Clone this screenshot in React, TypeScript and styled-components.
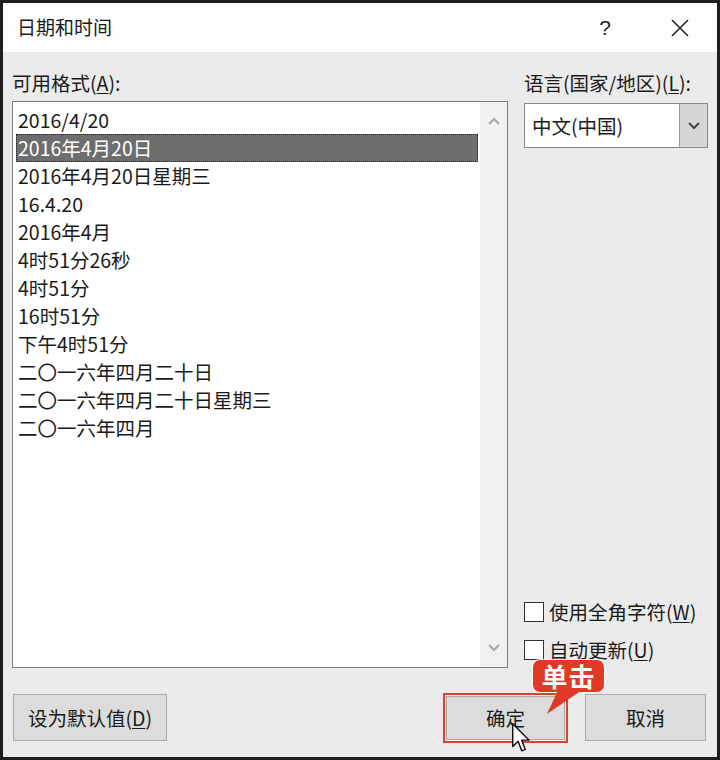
import React from "react";
import styled, { createGlobalStyle } from "styled-components";

const Global = createGlobalStyle`
  html, body { margin: 0; padding: 0; background: #1e1e1e; }
  body { font-family: "Noto Sans CJK SC", "Noto Sans", sans-serif; color: #1a1a1a; }
  * { box-sizing: border-box; }
`;

const Frame = styled.div`
  width: 720px;
  height: 760px;
  border: 3px solid #1e1e1e;
  display: flex;
  flex-direction: column;
  background: #ebebeb;
  font-size: 19.5px;
`;

const TitleBar = styled.div`
  height: 49px;
  flex: none;
  background: #fdfdfd;
  display: flex;
  align-items: center;
  padding: 0 14px 0 14px;
`;

const Title = styled.div`
  flex: 1;
  font-size: 19px;
  line-height: 1;
  padding-bottom: 2px;
`;

const TitleButton = styled.div`
  width: 46px;
  height: 40px;
  display: flex;
  align-items: center;
  justify-content: center;
  font-family: "Liberation Sans", sans-serif;
  font-size: 21px;
  color: #222;
  & + & { margin-left: 29px; }
`;

const Body = styled.div`
  flex: 1;
  display: flex;
  flex-direction: column;
  padding: 19px 9px 16px 9px;
`;

const Columns = styled.div`
  display: grid;
  grid-template-columns: 496px 184px;
  column-gap: 16px;
`;

const Column = styled.div`
  display: flex;
  flex-direction: column;
`;

const Label = styled.div<{ $gap: number }>`
  line-height: 24px;
  height: 24px;
  margin-bottom: ${(p) => p.$gap}px;
  white-space: nowrap;
`;

const Key = styled.span`
  text-decoration: underline;
  text-underline-offset: 2px;
`;

const ListBox = styled.div`
  height: 567px;
  border: 1px solid #7d7d7d;
  background: #fff;
  display: flex;
`;

const Items = styled.div`
  flex: 1;
  padding: 4px 2px 4px 3px;
  display: flex;
  flex-direction: column;
`;

const Item = styled.div<{ $selected?: boolean }>`
  height: 28px;
  line-height: 28px;
  padding-left: 2px;
  white-space: nowrap;
  color: ${(p) => (p.$selected ? "#fff" : "#1a1a1a")};
  background: ${(p) => (p.$selected ? "#6e6e6e" : "transparent")};
  outline: ${(p) => (p.$selected ? "1px dotted #222" : "none")};
  outline-offset: -1px;
`;

const ScrollTrack = styled.div`
  width: 27px;
  background: #f1f1f1;
  display: flex;
  flex-direction: column;
  justify-content: space-between;
`;

const ScrollButton = styled.div`
  height: 38px;
  display: flex;
  align-items: center;
  justify-content: center;
`;

const Select = styled.div`
  height: 45px;
  border: 1px solid #8a8a8a;
  background: #fff;
  display: flex;
  align-items: stretch;
`;

const SelectValue = styled.div`
  flex: 1;
  padding-left: 7px;
  display: flex;
  align-items: center;
`;

const DropButton = styled.div`
  width: 28px;
  background: #d6d6d6;
  border-left: 1px solid #9a9a9a;
  display: flex;
  align-items: center;
  justify-content: center;
`;

const CheckGroup = styled.div`
  margin-top: auto;
  display: flex;
  flex-direction: column;
  gap: 10px;
  padding-bottom: 4px;
`;

const CheckRow = styled.label`
  height: 28px;
  display: flex;
  align-items: center;
  gap: 5px;
  white-space: nowrap;
`;

const CheckText = styled.span`
  line-height: 28px;
`;

const Box = styled.span`
  width: 20px;
  height: 20px;
  border: 1px solid #333;
  background: #fff;
  flex: none;
`;

const ButtonRow = styled.div`
  margin-top: auto;
  display: flex;
  align-items: center;
  justify-content: space-between;
  padding-left: 1px;
  padding-right: 2px;
`;

const ButtonGroup = styled.div`
  display: flex;
  align-items: center;
  gap: 19px;
`;

const Button = styled.div<{ $w: number; $highlight?: boolean }>`
  position: relative;
  width: ${(p) => p.$w}px;
  height: ${(p) => (p.$highlight ? 44 : 47)}px;
  margin: ${(p) => (p.$highlight ? "0 1px" : "0")};
  background: #dcdcdc;
  border: 1px solid #ababab;
  display: flex;
  align-items: center;
  justify-content: center;
  white-space: nowrap;
  outline: ${(p) => (p.$highlight ? "2px solid #d8442e" : "none")};
  outline-offset: 1px;
`;

const ButtonText = styled.span`
  line-height: 1;
`;

const Callout = styled.div`
  position: absolute;
  left: 86px;
  top: -37px;
  width: 71px;
  height: 32px;
  background: #e03a26;
  border-radius: 7px;
  box-shadow: 0 0 0 1px rgba(255, 255, 255, 0.85);
  color: #fff;
  font-weight: 700;
  font-size: 26px;
  line-height: 32px;
  text-align: center;
  letter-spacing: 1px;
  z-index: 2;
`;

const Tail = styled.svg`
  position: absolute;
  left: 10px;
  top: 28px;
  overflow: visible;
`;

const Cursor = styled.svg`
  position: absolute;
  left: 65px;
  top: 26px;
  z-index: 3;
`;

const Chevron = ({ up, color = "#a8a8a8" }: { up?: boolean; color?: string }) => (
  <svg width="12" height="8" viewBox="0 0 12 8">
    <path
      d={up ? "M1 7 L6 2 L11 7" : "M1 1 L6 6 L11 1"}
      fill="none"
      stroke={color}
      strokeWidth="2"
    />
  </svg>
);

const items = [
  "2016/4/20",
  "2016年4月20日",
  "2016年4月20日星期三",
  "16.4.20",
  "2016年4月",
  "4时51分26秒",
  "4时51分",
  "16时51分",
  "下午4时51分",
  "二〇一六年四月二十日",
  "二〇一六年四月二十日星期三",
  "二〇一六年四月",
];

export default function App() {
  return (
    <>
      <Global />
      <Frame>
        <TitleBar>
          <Title>日期和时间</Title>
          <TitleButton>?</TitleButton>
          <TitleButton>
            <svg width="18" height="18" viewBox="0 0 18 18">
              <path d="M1 1 L17 17 M17 1 L1 17" stroke="#222" strokeWidth="1.6" />
            </svg>
          </TitleButton>
        </TitleBar>
        <Body>
          <Columns>
            <Column>
              <Label $gap={6}>
                可用格式(<Key>A</Key>):
              </Label>
              <ListBox>
                <Items>
                  {items.map((t, i) => (
                    <Item key={t} $selected={i === 1}>
                      {t}
                    </Item>
                  ))}
                </Items>
                <ScrollTrack>
                  <ScrollButton>
                    <Chevron up />
                  </ScrollButton>
                  <ScrollButton>
                    <Chevron />
                  </ScrollButton>
                </ScrollTrack>
              </ListBox>
            </Column>
            <Column>
              <Label $gap={8}>
                语言(国家/地区)(<Key>L</Key>):
              </Label>
              <Select>
                <SelectValue>中文(中国)</SelectValue>
                <DropButton>
                  <Chevron color="#444" />
                </DropButton>
              </Select>
              <CheckGroup>
                <CheckRow>
                  <Box />
                  <CheckText>
                    使用全角字符(<Key>W</Key>)
                  </CheckText>
                </CheckRow>
                <CheckRow>
                  <Box />
                  <CheckText>
                    自动更新(<Key>U</Key>)
                  </CheckText>
                </CheckRow>
              </CheckGroup>
            </Column>
          </Columns>
          <ButtonRow>
            <Button $w={154}>
              <ButtonText>
                设为默认值(<Key>D</Key>)
              </ButtonText>
            </Button>
            <ButtonGroup>
              <Button $w={119} $highlight>
                <ButtonText>确定</ButtonText>
                <Callout>
                  单击
                  <Tail width="45" height="30" viewBox="0 0 45 30">
                    <polygon points="16,0 42,0 4,26" fill="#e03a26" />
                  </Tail>
                </Callout>
                <Cursor width="20" height="30" viewBox="0 0 14 21">
                  <path
                    d="M0.5 0.5 L0.5 16.5 L4.3 12.8 L6.8 19.5 L9.3 18.5 L6.8 12 L12 12 Z"
                    fill="#fff"
                    stroke="#111"
                    strokeWidth="1"
                    strokeLinejoin="round"
                  />
                </Cursor>
              </Button>
              <Button $w={121}>
                <ButtonText>取消</ButtonText>
              </Button>
            </ButtonGroup>
          </ButtonRow>
        </Body>
      </Frame>
    </>
  );
}
